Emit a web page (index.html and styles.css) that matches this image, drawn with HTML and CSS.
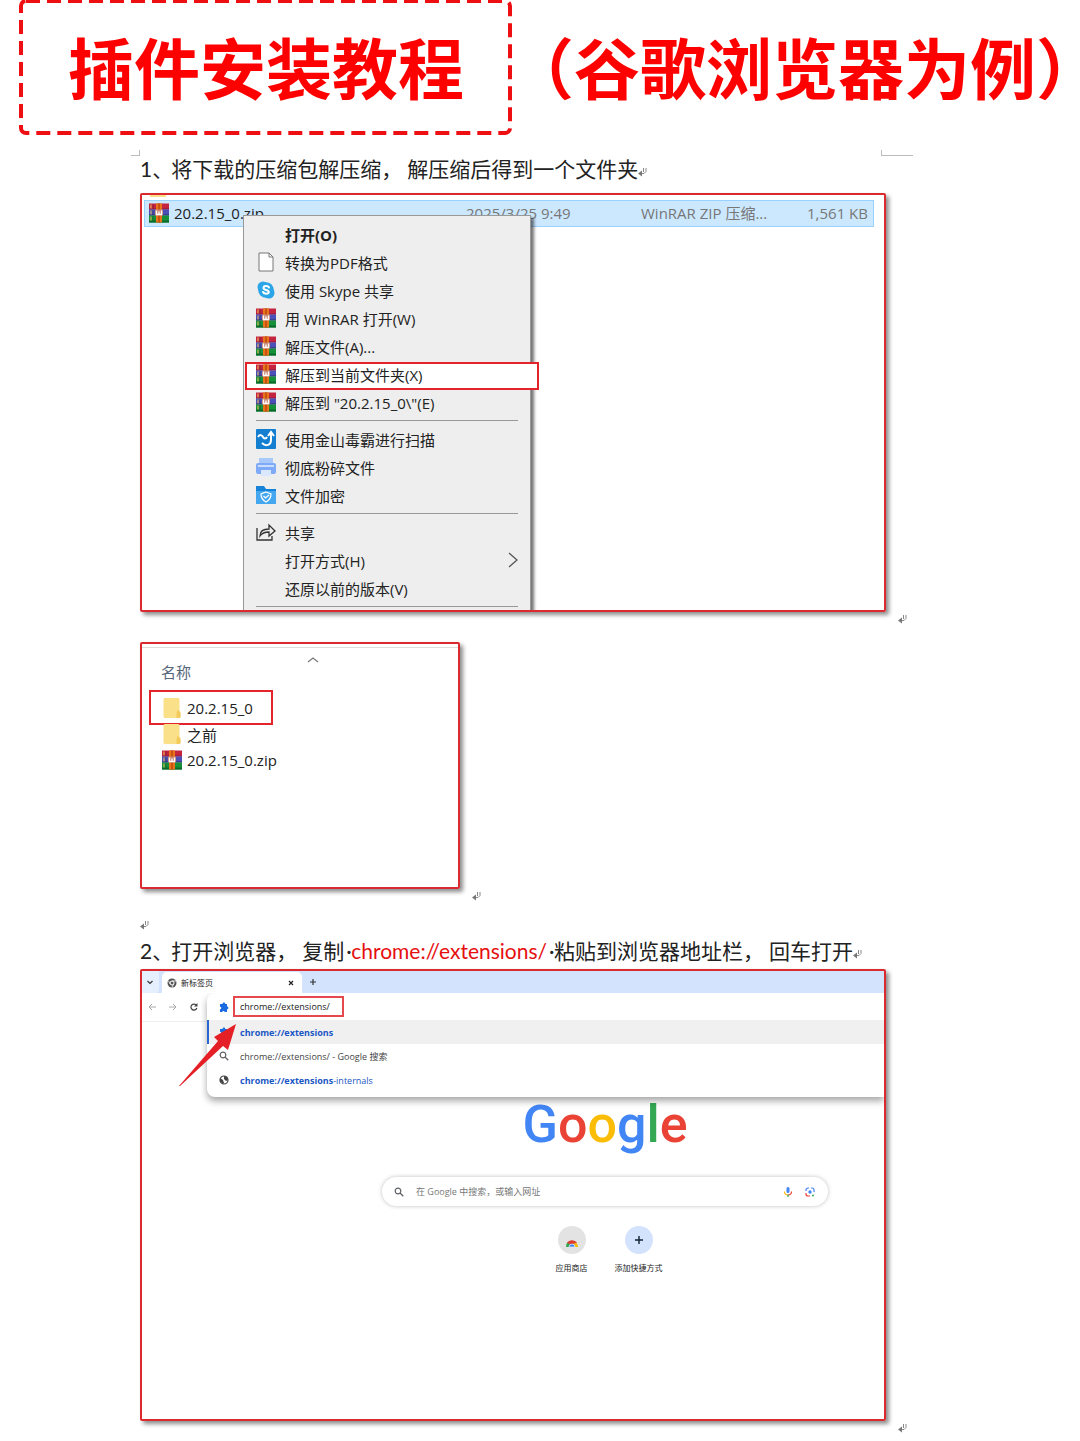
FILE: index.html
```html
<!DOCTYPE html>
<html lang="zh-CN">
<head>
<meta charset="utf-8">
<meta name="viewport" content="width=device-width, initial-scale=1">
<title>插件安装教程（谷歌浏览器为例）</title>
<link rel="stylesheet" href="styles.css">
</head>
<body>
<svg class="defs" aria-hidden="true">
  <symbol id="rar" viewBox="0 0 20 19">
    <rect width="20" height="6" fill="#c5243f"/><rect y="5" width="20" height="1" fill="#8c1640"/>
    <rect y="6" width="20" height="6" fill="#4b50b8"/><rect y="11" width="20" height="1" fill="#2c2c70"/>
    <rect y="12" width="20" height="7" fill="#16913a"/><rect y="17" width="20" height="2" fill="#0b6a2b"/>
    <path d="M2 1v4M2 7v4M2 13v4" stroke="#f0c35a" stroke-width="1"/>
    <path d="M4 1v4M4 7v4M4 13v4" stroke="#222" stroke-width="1" opacity=".4"/>
    <rect x="7" width="6" height="19" fill="#e8741c"/><rect x="9" width="2" height="19" fill="#c9520e"/>
    <rect x="6" y="6" width="8" height="6" rx="1" fill="#c98a78"/>
    <path d="M7.500 7v4h5V7M10 8v3" stroke="#fff" stroke-width="1.300" fill="none"/>
  </symbol>
  <symbol id="folder" viewBox="0 0 17 20">
    <path d="M1 0h14l1 1v12l1 2v4l-1 1H1l-1-1V1z" fill="#fbe08a"/>
    <path d="M14 12l2 1 1 2v4l-1 1h-3v-5z" fill="#f2cb5c"/>
  </symbol>
  <symbol id="pilcrow" viewBox="0 0 9 10">
    <path d="M5.500 1v4M8 1v3.500L6 6.500H3" fill="none" stroke="#888" stroke-width="1"/>
    <path d="M0 6.500L4 3.500v6z" fill="#777"/>
  </symbol>
  <symbol id="puzzle" viewBox="0 0 10 10">
    <path d="M1 2h2.500a1.400 1.400 0 0 1 2.800 0H8v2.500a1.400 1.400 0 0 1 0 2.800V10H5.700a1.300 1.300 0 0 0-2.500 0H1V7.300a1.200 1.200 0 0 0 0-2.500z" fill="#1a6be0"/>
  </symbol>
  <symbol id="lens" viewBox="0 0 10 10">
    <circle cx="4" cy="4" r="2.800" fill="none" stroke="#5f6368" stroke-width="1.200"/>
    <path d="M6 6l3.300 3.300" stroke="#5f6368" stroke-width="1.300"/>
  </symbol>
</svg>

<header class="banner">
  <h1 class="banner-title">
    <span class="banner-box">
      <svg class="banner-dash" aria-hidden="true"><rect class="banner-rect" x="2" y="1" rx="5"/></svg>
      插件安装教程
    </span>
    <span class="banner-note">（谷歌浏览器为例）</span>
  </h1>
</header>

<div class="crops" aria-hidden="true"><span class="crop crop-left"></span><span class="crop crop-right"></span></div>

<main class="doc">
  <h2 class="step step-first"><span>1、</span><span>将下载的压缩包解压缩，</span><span>解压缩后得到一个文件夹<svg class="mark" aria-hidden="true"><use href="#pilcrow"/></svg></span></h2>

  <div class="shot-row">
    <section class="shot files">
      <div class="peek" aria-hidden="true"></div>
      <div class="file-row">
        <svg class="icon" aria-hidden="true"><use href="#rar"/></svg>
        <span class="file-name">20.2.15_0.zip</span>
        <span class="file-date">2025/3/25 9:49</span>
        <span class="file-type">WinRAR ZIP 压缩...</span>
        <span class="file-size">1,561 KB</span>
      </div>
      <div class="menu">
        <button class="item item-main"><span class="icon"></span>打开(O)</button>
        <button class="item"><svg class="icon" viewBox="0 0 20 20" aria-hidden="true"><path d="M3 1h10l4 4v14H3z" fill="#fff" stroke="#777"/><path d="M13 1v4h4" fill="none" stroke="#777"/></svg>转换为PDF格式</button>
        <button class="item"><svg class="icon" viewBox="0 0 20 20" aria-hidden="true"><circle cx="7" cy="7" r="5.500" fill="#2aa5e8"/><circle cx="13" cy="13" r="5.500" fill="#2aa5e8"/><circle cx="10" cy="10" r="7.800" fill="#2aa5e8"/><path d="M13 7.500C12 5.500 7.500 5.600 7.500 8c0 2.500 5.300 1.500 5.300 4 0 2.300-4.800 2.300-5.800 0" fill="none" stroke="#fff" stroke-width="2" stroke-linecap="round"/></svg>使用 Skype 共享</button>
        <button class="item"><svg class="icon" aria-hidden="true"><use href="#rar"/></svg>用 WinRAR 打开(W)</button>
        <button class="item"><svg class="icon" aria-hidden="true"><use href="#rar"/></svg>解压文件(A)...</button>
        <button class="item item-marked"><svg class="icon" aria-hidden="true"><use href="#rar"/></svg>解压到当前文件夹(X)</button>
        <button class="item"><svg class="icon" aria-hidden="true"><use href="#rar"/></svg>解压到 "20.2.15_0\"(E)</button>
        <hr class="rule">
        <button class="item"><svg class="icon" viewBox="0 0 20 20" aria-hidden="true"><rect width="20" height="20" rx="1" fill="#147fd1"/><path d="M2 8c2-3 4-2 5 0s3 2 4 0M6 14c4 4 9 2 9-3V4M12 7l3-4 3 4" fill="none" stroke="#fff" stroke-width="2"/></svg>使用金山毒霸进行扫描</button>
        <button class="item"><svg class="icon" viewBox="0 0 20 20" aria-hidden="true"><path d="M3 1h14v7H3z" fill="#a9c9fb"/><rect y="6" width="20" height="11" rx="2" fill="#7faaf7"/><path d="M2 9h16" stroke="#c9defd" stroke-width="2"/><path d="M5 13h10v6H5z" fill="#d9e8ff"/></svg>彻底粉碎文件</button>
        <button class="item"><svg class="icon" viewBox="0 0 20 20" aria-hidden="true"><path d="M0 1h8l2 3h10v15H0z" fill="#1683d8"/><path d="M0 6h20v13H0z" fill="#45a7f0"/><path d="M10 7l5 2c0 4-1 6-5 8-4-2-5-4-5-8z" fill="none" stroke="#fff" stroke-width="1.200"/><path d="M7.500 11l2 2 3.500-3" fill="none" stroke="#fff" stroke-width="1.200"/></svg>文件加密</button>
        <hr class="rule">
        <button class="item"><svg class="icon" viewBox="0 0 20 20" aria-hidden="true"><path d="M1 6v12h15v-4" fill="none" stroke="#333" stroke-width="1.300"/><path d="M4 14c0-5 3-7 9-7V3l6 6-6 5v-4c-4 0-7 1-9 4z" fill="none" stroke="#333" stroke-width="1.300"/></svg>共享</button>
        <button class="item"><span class="icon"></span>打开方式(H)<svg class="sub" viewBox="0 0 10 16" aria-hidden="true"><path d="M1 1l8 7-8 7" fill="none" stroke="#555" stroke-width="1.300"/></svg></button>
        <button class="item"><span class="icon"></span>还原以前的版本(V)</button>
        <hr class="rule">
      </div>
    </section>
    <svg class="mark" aria-hidden="true"><use href="#pilcrow"/></svg>
  </div>

  <div class="shot-row">
    <section class="shot folder">
      <svg class="sort" viewBox="0 0 12 6" aria-hidden="true"><path d="M1 5l5-4 5 4" fill="none" stroke="#777" stroke-width="1.200"/></svg>
      <div class="column-name">名称</div>
      <ul class="entries">
        <li class="entry entry-marked"><svg class="icon" aria-hidden="true"><use href="#folder"/></svg>20.2.15_0</li>
        <li class="entry"><svg class="icon" aria-hidden="true"><use href="#folder"/></svg>之前</li>
        <li class="entry"><svg class="icon" aria-hidden="true"><use href="#rar"/></svg>20.2.15_0.zip</li>
      </ul>
    </section>
    <svg class="mark" aria-hidden="true"><use href="#pilcrow"/></svg>
  </div>

  <p class="blank"><svg class="mark" aria-hidden="true"><use href="#pilcrow"/></svg></p>
  <h2 class="step"><span>2、</span><span>打开浏览器，</span><span>复制</span><span class="dot">·</span><span class="url">chrome://extensions/</span><span class="dot">·</span><span>粘贴到浏览器地址栏，</span><span>回车打开<svg class="mark" aria-hidden="true"><use href="#pilcrow"/></svg></span></h2>

  <div class="shot-row">
    <section class="shot browser">
      <div class="tabs">
        <button class="tab-list" aria-label="搜索标签页"><svg viewBox="0 0 8 8" class="tiny"><path d="M1.500 3L4 5.500 6.500 3" fill="none" stroke="#333" stroke-width="1.200"/></svg></button>
        <div class="tab">
          <svg class="tab-icon" viewBox="0 0 10 10" aria-hidden="true"><circle cx="5" cy="5" r="4.500" fill="#555"/><circle cx="5" cy="5" r="2" fill="#555" stroke="#fff"/><path d="M5 3h4M3.300 6L1.500 3M6.700 6L5 9" stroke="#fff" stroke-width=".8"/></svg>
          <span class="tab-title">新标签页</span>
          <button class="plain" aria-label="关闭"><svg viewBox="0 0 8 8" class="tiny"><path d="M2 2l4 4M6 2L2 6" stroke="#222" stroke-width="1.200"/></svg></button>
        </div>
        <button class="plain" aria-label="新标签页"><svg viewBox="0 0 8 8" class="tiny"><path d="M4 1v6M1 4h6" stroke="#333" stroke-width="1.200"/></svg></button>
      </div>
      <div class="chrome-body">
        <nav class="nav">
          <button class="plain" aria-label="后退"><svg viewBox="0 0 8 8" class="tiny"><path d="M8 4H1M4 1L1 4l3 3" fill="none" stroke="#aaa"/></svg></button>
          <button class="plain" aria-label="前进"><svg viewBox="0 0 8 8" class="tiny"><path d="M0 4h7M4 1l3 3-3 3" fill="none" stroke="#aaa"/></svg></button>
          <button class="plain" aria-label="重新加载"><svg viewBox="0 0 8 8" class="tiny"><path d="M6.800 5A3 3 0 1 1 6.500 2.500" fill="none" stroke="#444" stroke-width="1.200"/><path d="M7.500 0v3.500H4z" fill="#444"/></svg></button>
        </nav>
        <div class="omnibox">
          <div class="address">
            <svg class="small" aria-hidden="true"><use href="#puzzle"/></svg>
            <input class="address-input" type="text" value="chrome://extensions/" aria-label="地址栏">
          </div>
          <a class="hint hint-active" href="#"><svg class="small" aria-hidden="true"><use href="#puzzle"/></svg><b>chrome://extensions</b></a>
          <a class="hint hint-search" href="#"><svg class="small" aria-hidden="true"><use href="#lens"/></svg>chrome://extensions/ - Google 搜索</a>
          <a class="hint" href="#"><svg class="small" viewBox="0 0 10 10" aria-hidden="true"><circle cx="5" cy="5" r="4" fill="#fff" stroke="#444" stroke-width="1.200"/><path d="M1 3l3 2 1 3-1 1-3-3zM5 1l3 1 1 3-2 1-2-2z" fill="#444"/></svg><span><b>chrome://extensions</b>-internals</span></a>
        </div>
      </div>
      <svg class="arrow" viewBox="0 0 58 64" aria-hidden="true"><path d="M0 63L39 18 35 14 57 1 49 27 44 23 1 63z" fill="#e51f26"/></svg>
      <div class="newtab">
        <div class="google" aria-label="Google"><span class="g-blue">G</span><span class="g-red">o</span><span class="g-yellow">o</span><span class="g-blue">g</span><span class="g-green">l</span><span class="g-red">e</span></div>
        <div class="search">
          <svg class="small" aria-hidden="true"><use href="#lens"/></svg>
          <input class="search-input" type="text" placeholder="在 Google 中搜索，或输入网址" aria-label="搜索">
          <svg class="small" viewBox="0 0 10 10" aria-hidden="true"><rect x="3.500" width="3" height="6" rx="1.500" fill="#4285f4"/><path d="M1.500 4.500C1.500 7 3 8 5 8" fill="none" stroke="#fbbc05" stroke-width="1.200"/><path d="M8.500 4.500C8.500 7 7 8 5 8" fill="none" stroke="#ea4335" stroke-width="1.200"/><path d="M5 7.500V10" stroke="#34a853" stroke-width="1.200"/></svg>
          <svg class="small" viewBox="0 0 10 10" aria-hidden="true"><path d="M1 4V3a2 2 0 0 1 2-2h1" fill="none" stroke="#4285f4" stroke-width="1.200"/><path d="M6 1h1a2 2 0 0 1 2 2v2" fill="none" stroke="#4285f4" stroke-width="1.200"/><path d="M1 6v1a2 2 0 0 0 2 2h2" fill="none" stroke="#ea4335" stroke-width="1.200"/><circle cx="5" cy="5" r="1.700" fill="#4285f4"/><circle cx="8" cy="8.500" r="1" fill="#34a853"/></svg>
        </div>
        <div class="shortcuts">
          <a class="shortcut" href="#"><span class="disc disc-store"><svg class="store" viewBox="0 0 12 8" aria-hidden="true"><path d="M0 8a6 6 0 0 1 2-5l4 5z" fill="#34a853"/><path d="M1 4a6 6 0 0 1 10 0L6 6z" fill="#db3b30"/><path d="M12 8a6 6 0 0 0-1.500-4L6 5v3z" fill="#fbbc05"/><path d="M3 8a3 3 0 0 1 6 0z" fill="#4285f4" stroke="#fff" stroke-width=".6"/></svg></span>应用商店</a>
          <a class="shortcut" href="#"><span class="disc disc-add"><svg class="plus" viewBox="0 0 10 10" aria-hidden="true"><path d="M5 1v8M1 5h8" stroke="#123" stroke-width="1.400"/></svg></span>添加快捷方式</a>
        </div>
      </div>
    </section>
    <svg class="mark" aria-hidden="true"><use href="#pilcrow"/></svg>
  </div>
</main>
</body>
</html>
```
FILE: styles.css
```css
* { box-sizing: border-box; }

body {
  margin: 0;
  background: #fff;
  color: #222;
  font-family: "Open Sans", "Noto Sans CJK SC", sans-serif;
  font-size: 15px;
}

button, input { font: inherit; color: inherit; }
button { border: 0; padding: 0; background: none; text-align: left; }
a { color: inherit; text-decoration: none; }
.defs { display: none; }

/* Title banner */
.banner { padding-left: 19px; }
.banner-title {
  display: flex;
  align-items: flex-start;
  gap: 29px;
  margin: 0;
  color: #fe0000;
  font-family: "Noto Sans CJK SC", sans-serif;
  font-size: 66px;
  font-weight: 700;
  line-height: 130px;
  white-space: nowrap;
}
.banner-box { position: relative; padding: 0 48px 6px 49px; }
.banner-note { font-feature-settings: "halt"; }
.banner-dash { position: absolute; inset: 0; width: 100%; height: 100%; }
.banner-rect {
  width: calc(100% - 4px);
  height: calc(100% - 4px);
  fill: none;
  stroke: #ee0f12;
  stroke-width: 4px;
  stroke-dasharray: 14 7;
}

/* Page corner marks */
.crops { display: flex; justify-content: space-between; padding: 14px 167px 0 131px; }
.crop { height: 6px; border: 0 solid #bbb; }
.crop-left { width: 9px; border-width: 0 1px 1px 0; }
.crop-right { width: 32px; border-width: 0 0 1px 1px; }

/* Document */
.doc { padding: 0 173px 5px 140px; }
.step {
  display: flex;
  gap: 5px;
  margin: 0 0 5px;
  font-family: Lato, "Noto Sans CJK SC", sans-serif;
  font-size: 21px;
  font-weight: 400;
  line-height: 26px;
  white-space: nowrap;
}
.step-first { margin-bottom: 11px; }
.step span:first-child { margin-right: -7px; }
.url { color: #e60f0f; }
.dot { width: 0; margin-left: -3px; }
.mark { flex: none; width: 9px; height: 10px; }
.blank { display: flex; align-items: flex-end; height: 37px; margin: 0; padding-bottom: 8px; }

.shot-row { display: flex; align-items: flex-end; gap: 12px; margin-bottom: 18px; }
.shot-row:has(.folder), .shot-row:last-child { margin-bottom: 0; }
.shot {
  position: relative;
  flex: 1;
  min-width: 0;
  margin-bottom: 12px;
  border: 2px solid #db2a2f;
  border-radius: 2px;
  box-shadow: 3px 3px 4px rgba(0, 0, 0, .45);
  overflow: hidden;
}
.icon { flex: none; width: 20px; height: 20px; }

/* Explorer with context menu */
.peek { width: 16px; height: 2px; margin: 0 0 3px 8px; background: #fbe08a; }
.file-row {
  display: grid;
  grid-template-columns: 20px 287px 170px 1fr auto;
  column-gap: 5px;
  align-items: center;
  height: 27px;
  margin: 0 10px 0 2px;
  padding: 0 5px 2px 4px;
  border: 1px solid #99d1ff;
  background: #cce8ff;
  color: #777;
  line-height: 20px;
}
.file-name { color: #222; }
.menu {
  display: flow-root;
  position: relative;
  width: 288px;
  margin: -12px 0 0 101px;
  padding: 4px 12px 0;
  border: 1px solid #999;
  border-width: 1px 1px 0;
  background: #eee;
  box-shadow: 3px 3px 3px rgba(0, 0, 0, .55);
}
.item {
  position: relative;
  display: flex;
  align-items: center;
  gap: 9px;
  width: 100%;
  height: 28px;
}
.item-main { font-weight: 700; }
.item-marked { z-index: 0; }
.item-marked::before {
  content: "";
  position: absolute;
  z-index: -1;
  inset: 2px -21px -2px -11px;
  border: 2px solid #e3242b;
  background: #fff;
}
.sub { width: 10px; height: 16px; margin-left: auto; }
.rule { height: 1px; margin: 4px 0; border: 0; background: #999; }
.rule:last-child { margin-bottom: 3px; }

/* Extracted folder */
.folder { flex: 0 0 320px; padding: 13px 8px 114px 7px; }
.folder::before { content: ""; position: absolute; inset: 3px 0 auto; border-top: 1px solid #ddd; }
.sort { display: block; width: 12px; height: 6px; margin-left: 158px; }
.column-name { padding-left: 12px; color: #55657a; line-height: 18px; }
.entries { margin: 9px 0 0; padding: 0; list-style: none; }
.entry { display: flex; align-items: center; gap: 5px; height: 26px; padding-left: 13px; }
.entry-marked { width: 124px; height: 35px; margin-bottom: -4px; padding-left: 11px; border: 2px solid #e3242b; }

/* Browser window */
.browser { padding-bottom: 145px; font-size: 9px; }
.tiny { display: block; width: 8px; height: 8px; }
.small { flex: none; width: 10px; height: 10px; }
.tabs { display: flex; align-items: stretch; height: 22px; background: #d3e3fd; }
.tab-list { width: 17px; padding-left: 4px; border-radius: 0 0 4px 0; background: #e6effe; }
.tab {
  display: flex;
  align-items: center;
  gap: 4px;
  width: 140px;
  margin: 1px 7px 0 3px;
  padding: 0 7px 0 5px;
  border-radius: 5px 5px 0 0;
  background: #fff;
}
.tab-icon { width: 10px; height: 10px; }
.tab-title { flex: 1; font-size: 8px; }
.chrome-body { display: flex; align-items: flex-start; }
.nav { display: flex; align-items: center; gap: 13px; width: 65px; height: 29px; padding-left: 6px; border-bottom: 1px solid #eee; }
.omnibox {
  flex: 1;
  min-width: 0;
  padding-bottom: 5px;
  border-radius: 8px 0 0 8px;
  background: #fff;
  box-shadow: 0 4px 7px rgba(0, 0, 0, .35);
  clip-path: inset(0 0 -14px -6px);
}
.address { display: flex; align-items: center; gap: 4px; height: 27px; padding-left: 12px; }
.address-input {
  width: 111px;
  height: 21px;
  padding: 0 5px;
  border: 2px solid #e5484d;
  background: #fff;
  outline: 0;
}
.hint { display: flex; align-items: center; gap: 11px; height: 24px; padding-left: 12px; color: #1a56c4; }
.hint-active { background: #f0f0f0; box-shadow: inset 2px 0 #2a66d0; }
.hint-search { color: #444; }
.arrow { position: absolute; left: 37px; top: 52px; width: 58px; height: 64px; }

.newtab { padding-left: 184px; }
.google {
  display: flex;
  justify-content: center;
  margin-bottom: 24px;
  font-family: Roboto, sans-serif;
  font-size: 52px;
  font-weight: 500;
  line-height: 56px;
}
.g-blue { color: #4285f4; }
.g-red { color: #ea4335; }
.g-yellow { color: #fbbc05; }
.g-green { color: #34a853; }
.search {
  display: flex;
  align-items: center;
  gap: 12px;
  width: 446px;
  height: 29px;
  margin: 0 auto;
  padding: 0 13px 0 12px;
  border-radius: 15px;
  background: #fff;
  box-shadow: 0 0 4px rgba(0, 0, 0, .25);
}
.search-input { flex: 1; min-width: 0; padding: 0; border: 0; background: none; }
.search-input::placeholder { color: #777; opacity: 1; }
.shortcuts { display: flex; justify-content: center; margin-top: 20px; }
.shortcut { display: flex; flex-direction: column; align-items: center; gap: 8px; width: 67px; font-size: 8px; line-height: 12px; }
.disc { display: grid; place-items: center; width: 28px; height: 28px; border-radius: 50%; }
.disc-store { background: #e3e3e3; }
.disc-add { background: #d3e3fd; }
.store { width: 12px; height: 8px; margin-top: 5px; }
.plus { width: 10px; height: 10px; }
```
